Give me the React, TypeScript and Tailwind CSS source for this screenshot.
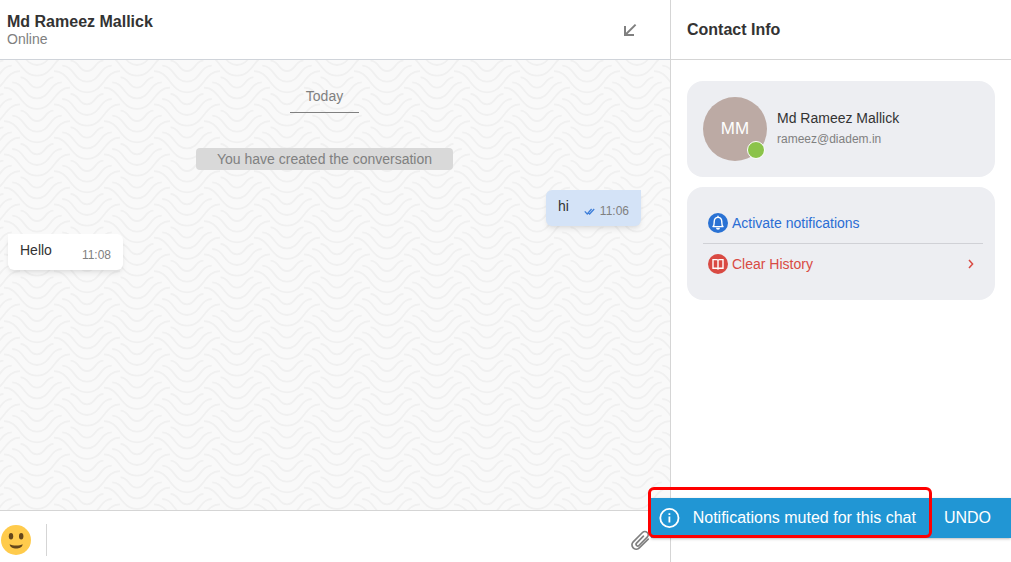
import { useState } from 'react';

type Message = {
  id: number;
  text: string;
  time: string;
  own: boolean;
};

const messages: Message[] = [
  { id: 1, text: 'hi', time: '11:06', own: true },
  { id: 2, text: 'Hello', time: '11:08', own: false },
];

// Each column of waves repeats three times per tile, the next column is shifted by half a step
const WavePattern = () => (
  <svg className="absolute inset-0 w-full h-full" aria-hidden="true">
    <defs>
      <g id="wave" fill="none" stroke="#f0f0f0" strokeWidth="1.8">
        <path d="M-16.4 0C-8 0 -8.6 10.4 0 10.4S8 0 16.4 0" />
        <path d="M-24.8 5C-13 5 -13 21 0 21S13 5 24.8 5" />
        <path d="M-33 10.4C-17 10.4 -17 31.6 0 31.6S17 10.4 33 10.4" />
      </g>
      <pattern id="waves" width="100" height="100" patternUnits="userSpaceOnUse">
        {[-16, 17.3, 50.7, 84].map((y) => (
          <use key={y} href="#wave" x="37" y={y} />
        ))}
        {[-32.7, 0.7, 34, 67.3].map((y) => (
          <g key={y}>
            <use href="#wave" x="-13" y={y} />
            <use href="#wave" x="87" y={y} />
          </g>
        ))}
      </pattern>
    </defs>
    <rect width="100%" height="100%" fill="url(#waves)" />
  </svg>
);

const MinimizeIcon = () => (
  <svg className="w-5 h-5" viewBox="0 0 20 20" fill="none" stroke="#808080" strokeWidth="2">
    <path d="M15.6 4.6L5.4 14.8M5 6V15H14" />
  </svg>
);

const DoubleCheckIcon = () => (
  <svg className="w-3 h-3" viewBox="0 0 12 12" fill="none" stroke="#3f7fd9" strokeWidth="1.3">
    <path d="M0.8 6.4L3.2 9L7.6 4M4.2 7.8L5.6 9L10.2 4" />
  </svg>
);

const BellIcon = () => (
  <svg className="w-5 h-5 shrink-0" viewBox="0 0 20 20">
    <circle cx="10" cy="10" r="10" fill="#2a72d4" />
    <path
      d="M5 13.6C6.3 12.6 6.1 11 6.2 8.6C6.3 6 7.8 4.4 10 4.4S13.7 6 13.8 8.6C13.9 11 13.7 12.6 15 13.6Z"
      fill="none"
      stroke="#fff"
      strokeWidth="1.4"
      strokeLinejoin="round"
    />
    <path d="M10 2.8V4.2" stroke="#fff" strokeWidth="1.4" />
    <path d="M8 14.8a2 2 0 0 0 4 0Z" fill="#fff" />
  </svg>
);

const BookIcon = () => (
  <svg className="w-5 h-5 shrink-0" viewBox="0 0 20 20">
    <circle cx="10" cy="10" r="10" fill="#d94a43" />
    <path
      d="M5 5.6H8.4Q9.6 5.6 10 6.2Q10.4 5.6 11.6 5.6H15V14.2H11.6Q10.4 14.2 10 14.8Q9.6 14.2 8.4 14.2H5ZM10 6.2V14.6"
      fill="none"
      stroke="#fff"
      strokeWidth="1.4"
    />
  </svg>
);

const SmileyIcon = () => (
  <svg className="w-[30px] h-[30px]" viewBox="0 0 30 30">
    <circle cx="15" cy="15" r="15" fill="#ffcb4c" />
    <ellipse cx="10" cy="11.2" rx="2.2" ry="3.2" fill="#65471b" />
    <ellipse cx="20.2" cy="11.2" rx="2.2" ry="3.2" fill="#65471b" />
    <path d="M8.6 19.2C11.5 21 18.8 21 21.7 19.2C21 25 9.4 25 8.6 19.2Z" fill="#65471b" />
  </svg>
);

const ClipIcon = () => (
  <svg className="w-5 h-5" viewBox="0 0 20 20" fill="none" stroke="#808080" strokeWidth="1.7" strokeLinecap="round">
    <path d="M13.4 6.2L6.6 13.2a1.6 1.6 0 0 0 2.3 2.3L17.2 7.2a3.3 3.3 0 0 0-4.7-4.7L3.2 11.8a4.3 4.3 0 0 0 6.1 6.1L18.2 9.2" />
  </svg>
);

const MessageBubble = ({ message }: { message: Message }) => (
  <div
    className={`flex h-9 px-3 rounded-md text-sm shadow-md shadow-black/8 ${
      message.own ? 'self-end bg-[#d4e3f7] rounded-tr-none gap-[15px]' : 'self-start bg-white rounded-tl-none gap-[30px]'
    }`}
  >
    <span className="leading-8 text-[#333333]">{message.text}</span>
    <span className="flex items-center gap-1 pt-1.5 text-xs text-[#808080]">
      {message.own && <DoubleCheckIcon />}
      {message.time}
    </span>
  </div>
);

export default function App() {
  const [draft, setDraft] = useState('');

  return (
    <div className="relative flex h-screen overflow-hidden bg-white font-['Liberation_Sans',Arial,sans-serif] text-[#333333]">
      <main className="flex flex-col flex-1 min-w-0">
        <header className="flex items-center justify-between h-15 pl-[7px] pr-[30px] border-b border-[#d0d4da]">
          <div>
            <h1 className="text-base leading-5 font-bold">Md Rameez Mallick</h1>
            <p className="text-sm leading-[15px] text-[#808080]">Online</p>
          </div>
          <button type="button" aria-label="Minimize">
            <MinimizeIcon />
          </button>
        </header>

        <section className="relative flex-1 bg-[#f9f9f9] overflow-hidden">
          <WavePattern />
          <div className="relative flex flex-col items-center pt-[26px] pl-2 pr-[29px]">
            <span className="px-4 pb-1.5 border-b border-[#808080] text-sm leading-5 text-[#808080]">Today</span>
            <span className="mt-[35px] mb-5 px-[21px] rounded-sm bg-[#d9d9d9] text-sm leading-[22px] text-[#808080]">
              You have created the conversation
            </span>
            <div className="flex flex-col self-stretch gap-2">
              {messages.map((message) => (
                <MessageBubble key={message.id} message={message} />
              ))}
            </div>
          </div>
        </section>

        <footer className="flex items-center h-[52px] pl-px pr-5 pt-1.5 border-t border-[#d5d5d5]">
          <button type="button" aria-label="Emoji">
            <SmileyIcon />
          </button>
          <input
            type="text"
            aria-label="Message"
            value={draft}
            onChange={(e) => setDraft(e.target.value)}
            className="flex-1 min-w-0 h-8 ml-[15px] px-3 border-l border-[#d5d5d5] text-sm outline-none"
          />
          <button type="button" aria-label="Attach file">
            <ClipIcon />
          </button>
        </footer>
      </main>

      <aside className="w-[341px] shrink-0 border-l border-[#d5d5d5]">
        <header className="flex items-center h-15 px-4 border-b border-[#d5d5d5]">
          <h2 className="text-base font-bold">Contact Info</h2>
        </header>
        <div className="flex flex-col gap-2.5 px-4 pt-[21px]">
          <div className="flex items-center gap-2.5 p-4 rounded-2xl bg-[#edeef2]">
            <div className="relative flex items-center justify-center w-16 h-16 rounded-full bg-[#bcaaa4] text-[17px] text-white">
              MM
              <span className="absolute right-0.5 bottom-0.5 w-[18px] h-[18px] rounded-full border border-white bg-[#8bc34a]" />
            </div>
            <div className="pb-0.5">
              <p className="text-sm leading-[22px]">Md Rameez Mallick</p>
              <p className="text-xs leading-5 text-[#808080]">rameez@diadem.in</p>
            </div>
          </div>

          <div className="pl-4 pr-3 py-4 rounded-2xl bg-[#edeef2] text-sm">
            <button type="button" className="flex items-center w-full h-[41px] gap-1 pl-[5px] border-b border-[#d0d1d6] text-[#2a6dd4]">
              <BellIcon />
              Activate notifications
            </button>
            <button type="button" className="flex items-center w-full h-10 gap-1 pl-[5px] pr-2 text-[#d94a43]">
              <BookIcon />
              <span className="flex-1 text-left">Clear History</span>
              <svg className="w-2 h-3" viewBox="0 0 8 12" fill="none" stroke="currentColor" strokeWidth="1.5">
                <path d="M2 2L5.6 6L2 10" />
              </svg>
            </button>
          </div>
        </div>
      </aside>

      <div role="status" className="absolute right-0 bottom-6 flex items-center h-10 pl-2 pr-5 bg-[#2196d4] text-base text-white shadow-sm shadow-black/20">
        <svg className="w-[22px] h-[22px] mr-3" viewBox="0 0 22 22" fill="none" stroke="#fff" strokeWidth="1.8">
          <circle cx="10.4" cy="11" r="9.1" />
          <path d="M10.4 9.6V15.6M10.4 6.2V8" />
        </svg>
        <span>Notifications muted for this chat</span>
        <button type="button" className="ml-7">
          UNDO
        </button>
        <span className="absolute -left-[3px] -top-[11px] bottom-0 right-[79px] rounded-md border-3 border-[#ff0000] pointer-events-none" />
      </div>
    </div>
  );
}
